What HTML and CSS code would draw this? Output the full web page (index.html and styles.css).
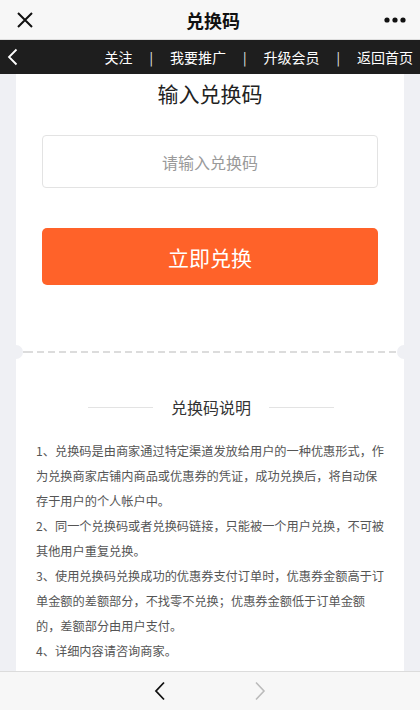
FILE: index.html
```html
<!DOCTYPE html>
<html lang="zh-CN">
<head>
    <meta charset="UTF-8">
    <meta name="viewport" content="width=device-width, initial-scale=1.0">
    <title>兑换码</title>
    <link rel="stylesheet" href="styles.css">
</head>
<body>

    <header class="topbar">
        <span class="topbar-close">
            <svg width="18" height="18" viewBox="0 0 18 18"><path d="M2 2 L16 16 M16 2 L2 16" stroke="#111" stroke-width="2" fill="none"/></svg>
        </span>
        <h1>兑换码</h1>
        <span class="topbar-more">
            <svg width="22" height="6" viewBox="0 0 22 6"><circle cx="3" cy="3" r="2.6" fill="#111"/><circle cx="11" cy="3" r="2.6" fill="#111"/><circle cx="19" cy="3" r="2.6" fill="#111"/></svg>
        </span>
    </header>

    <nav class="shopbar">
        <span class="shopbar-back">
            <svg width="11" height="18" viewBox="0 0 11 18"><path d="M9.5 1.5 L2 9 L9.5 16.5" stroke="#fff" stroke-width="1.8" fill="none"/></svg>
        </span>
        <div class="shopbar-links">
            <a>关注</a>
            <span class="sep">|</span>
            <a>我要推广</a>
            <span class="sep">|</span>
            <a>升级会员</a>
            <span class="sep">|</span>
            <a>返回首页</a>
        </div>
    </nav>

    <main class="card">
        <section class="redeem">
            <h2>输入兑换码</h2>
            <input type="text" class="code-input" placeholder="请输入兑换码">
            <button class="redeem-btn">立即兑换</button>
        </section>

        <div class="divider"></div>

        <section class="notes">
            <h3><span>兑换码说明</span></h3>
            <p>1、兑换码是由商家通过特定渠道发放给用户的一种优惠形式，作为兑换商家店铺内商品或优惠券的凭证，成功兑换后，将自动保存于用户的个人帐户中。</p>
            <p>2、同一个兑换码或者兑换码链接，只能被一个用户兑换，不可被其他用户重复兑换。</p>
            <p>3、使用兑换码兑换成功的优惠券支付订单时，优惠券金额高于订单金额的差额部分，不找零不兑换；优惠券金额低于订单金额的，差额部分由用户支付。</p>
            <p>4、详细内容请咨询商家。</p>
        </section>
    </main>

    <footer class="toolbar">
        <svg width="12" height="20" viewBox="0 0 12 20"><path d="M10 1.5 L2 10 L10 18.5" stroke="#111" stroke-width="1.8" fill="none"/></svg>
        <svg width="12" height="20" viewBox="0 0 12 20"><path d="M2 1.5 L10 10 L2 18.5" stroke="#bbb" stroke-width="1.6" fill="none"/></svg>
    </footer>

</body>
</html>
```

FILE: styles.css
```css
body {
    font-family: "Noto Sans CJK SC", "Noto Sans", sans-serif;
    background-color: #eff0f4;
    margin: 0;
    padding: 0;
    height: 710px;
    overflow: hidden;
    display: flex;
    flex-direction: column;
}

.topbar {
    height: 39px;
    background-color: #f7f7f7;
    border-bottom: 1px solid #dedede;
    display: flex;
    align-items: center;
    justify-content: space-between;
    padding: 0 14px 0 16px;
    flex-shrink: 0;
}

.topbar h1 {
    margin: 0;
    font-size: 18px;
    font-weight: bold;
    color: #111;
    padding-left: 4px;
}

.topbar-close,
.topbar-more {
    display: flex;
    width: 24px;
}

.topbar-more {
    justify-content: flex-end;
}

.shopbar {
    height: 34px;
    background-color: #1e1e1e;
    display: flex;
    align-items: center;
    justify-content: space-between;
    padding: 0 7px 0 7px;
    flex-shrink: 0;
}

.shopbar-back {
    display: flex;
}

.shopbar-links {
    display: flex;
    align-items: center;
    font-size: 14px;
    color: #fff;
}

.shopbar-links .sep {
    margin: 0 17px;
    color: #eee;
    font-size: 13px;
}

.card {
    flex: 1;
    margin: 0 16px;
    background-color: #fff;
    overflow: hidden;
}

.redeem {
    padding: 4px 26px 0;
    display: flex;
    flex-direction: column;
}

.redeem h2 {
    margin: 0;
    font-size: 21px;
    font-weight: normal;
    line-height: 30px;
    color: #222;
    text-align: center;
}

.code-input {
    margin-top: 27px;
    height: 53px;
    box-sizing: border-box;
    border: 1px solid #e3e3e3;
    border-radius: 4px;
    font-family: inherit;
    font-size: 16px;
    text-align: center;
    outline: none;
}

.code-input::placeholder {
    color: #9a9a9a;
}

.redeem-btn {
    margin-top: 40px;
    height: 57px;
    border: none;
    border-radius: 5px;
    background-color: #ff6229;
    color: #fff;
    font-family: inherit;
    font-size: 21px;
    cursor: pointer;
}

.divider {
    position: relative;
    margin: 66px 0 0;
    height: 2px;
    background-image: repeating-linear-gradient(90deg, #dcdcdc 0 7px, transparent 7px 11px);
    background-position: 10px 0;
}

.divider::before,
.divider::after {
    content: "";
    position: absolute;
    top: -6px;
    width: 14px;
    height: 14px;
    border-radius: 50%;
    background-color: #eff0f4;
}

.divider::before {
    left: -7px;
}

.divider::after {
    right: -7px;
}

.notes {
    padding: 42px 18px 0 20px;
}

.notes h3 {
    margin: 0 0 20px;
    display: flex;
    align-items: center;
    justify-content: center;
    font-size: 16px;
    font-weight: normal;
    line-height: 24px;
    color: #333;
}

.notes h3::before,
.notes h3::after {
    content: "";
    width: 65px;
    border-top: 1px solid #e3e3e3;
}

.notes h3 span {
    margin: 0 18px;
}

.notes p {
    margin: 0;
    font-size: 12.2px;
    line-height: 25px;
    color: #555;
}

.toolbar {
    height: 38px;
    background-color: #f7f7f7;
    border-top: 1px solid #dcdcdc;
    display: flex;
    align-items: center;
    justify-content: center;
    gap: 88px;
    flex-shrink: 0;
}
```
